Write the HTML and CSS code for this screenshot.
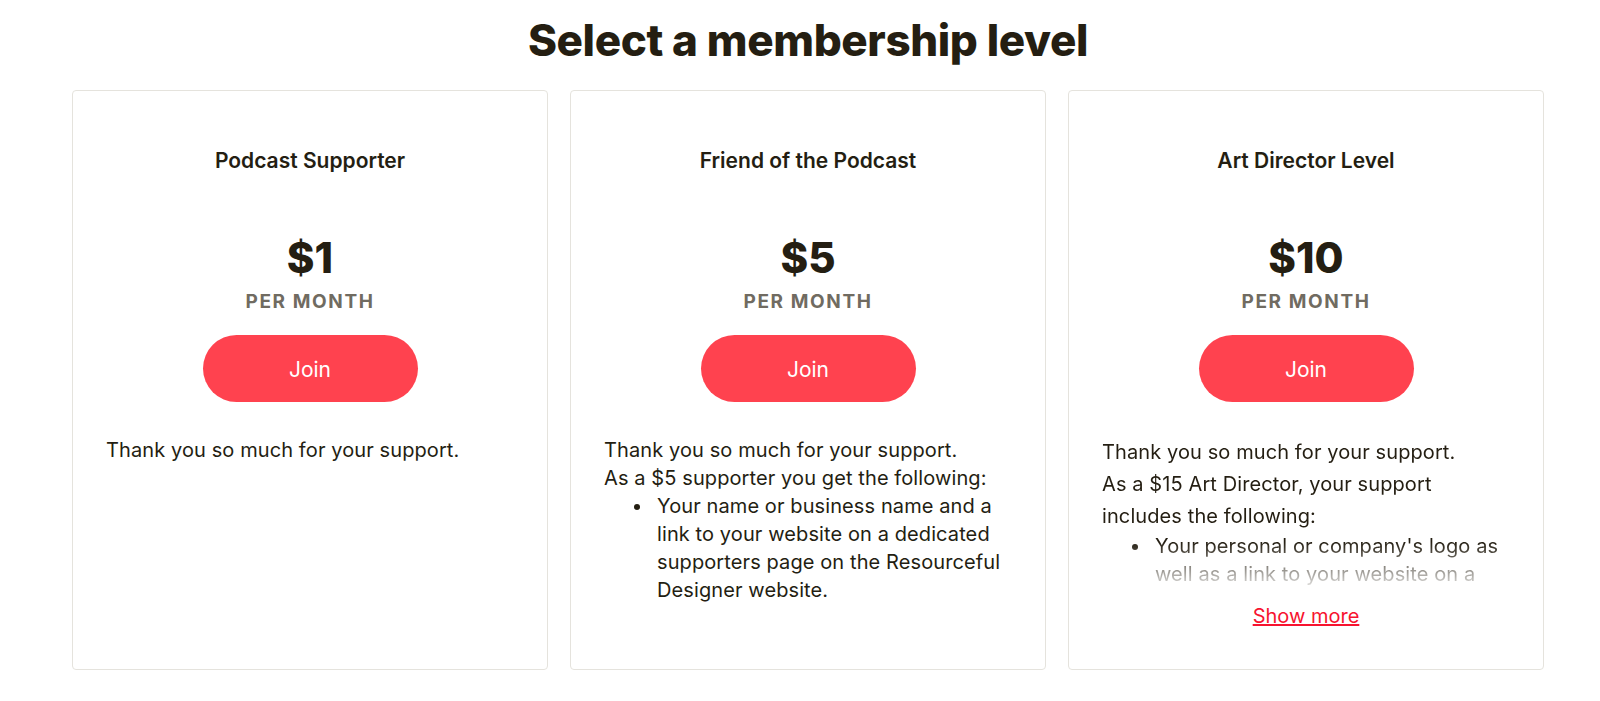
FILE: index.html
```html
<!DOCTYPE html>
<html>
<head>
<meta http-equiv="Content-Type" content="text/html; charset=UTF-8" />
<title>Select a membership level</title>
<link rel="stylesheet" href="styles.css">
</head>
<body>
  <div class="page">
    <h1 class="page-title">Select a membership level</h1>

    <div class="tiers">

      <div class="tier">
        <div class="tier-name">Podcast Supporter</div>
        <div class="tier-price">$1</div>
        <div class="tier-period">PER MONTH</div>
        <div class="tier-action"><button class="join-button">Join</button></div>
        <div class="tier-desc">
          <p class="desc-text">Thank you so much for your support.</p>
        </div>
      </div>

      <div class="tier">
        <div class="tier-name">Friend of the Podcast</div>
        <div class="tier-price">$5</div>
        <div class="tier-period">PER MONTH</div>
        <div class="tier-action"><button class="join-button">Join</button></div>
        <div class="tier-desc">
          <p class="desc-text">Thank you so much for your support.<br>As a $5 supporter you get the following:</p>
          <ul class="desc-list">
            <li>Your name or business name and a link to your website on a dedicated supporters page on the Resourceful Designer website.</li>
          </ul>
        </div>
      </div>

      <div class="tier">
        <div class="tier-name">Art Director Level</div>
        <div class="tier-price">$10</div>
        <div class="tier-period">PER MONTH</div>
        <div class="tier-action"><button class="join-button">Join</button></div>
        <div class="tier-desc clamped">
          <p class="desc-text tall">Thank you so much for your support.</p>
          <p class="desc-text tall">As a $15 Art Director, your support includes the following:</p>
          <ul class="desc-list">
            <li>Your personal or company's logo as well as a link to your website on a dedicated supporters page on the Resourceful Designer website.</li>
          </ul>
        </div>
        <a class="show-more" href="#">Show more</a>
      </div>

    </div>
  </div>
</body>
</html>
```

FILE: styles.css
```css
html, body {
  margin: 0;
  padding: 0;
  background: white;
}
body {
  color: #241e12;
  font-family: Inter, "Noto Sans", Arial, sans-serif;
}
.page {
  width: 1472px;
  margin-left: 72px;
}
.page-title {
  margin: 14px 0 0 0;
  font-size: 44px;
  line-height: 52px;
  font-weight: 800;
  letter-spacing: -0.4px;
  text-align: center;
}
.tiers {
  display: grid;
  grid-template-columns: repeat(3, 476px);
  gap: 22px;
  margin-top: 24px;
}
.tier {
  display: flex;
  flex-direction: column;
  border: 1px solid #e5e3dd;
  border-radius: 4px;
  padding: 56px 33px 40px 33px;
  height: 580px;
  box-sizing: border-box;
}
.tier-name {
  text-align: center;
  font-size: 21px;
  line-height: 28px;
  font-weight: 600;
}
.tier-price {
  margin-top: 59px;
  text-align: center;
  font-size: 42px;
  line-height: 48px;
  font-weight: 800;
}
.tier-period {
  margin-top: 8px;
  text-align: center;
  font-size: 19px;
  line-height: 24px;
  font-weight: 700;
  letter-spacing: 1.6px;
  color: #706b61;
}
.tier-action {
  margin-top: 21px;
  display: flex;
  justify-content: center;
}
.join-button {
  width: 215px;
  height: 67px;
  border: none;
  border-radius: 34px;
  background: #ff424f;
  color: white;
  font-family: inherit;
  font-size: 21px;
  font-weight: 400;
  padding-top: 2px;
}
.tier-desc {
  margin-top: 34px;
  font-size: 20px;
  line-height: 28px;
  letter-spacing: 0.1px;
}
.desc-text {
  margin: 0;
}
.desc-text.tall {
  line-height: 32px;
}
.desc-list {
  margin: 0;
  padding-left: 53px;
  list-style: none;
}
.desc-list li {
  position: relative;
}
.desc-list li::before {
  content: "";
  position: absolute;
  left: -23px;
  top: 12px;
  width: 6px;
  height: 6px;
  border-radius: 50%;
  background: #241e12;
}
.clamped {
  height: 166px;
  overflow: hidden;
  -webkit-mask-image: linear-gradient(to bottom, black 68%, rgba(0, 0, 0, 0.05) 100%);
  mask-image: linear-gradient(to bottom, black 68%, rgba(0, 0, 0, 0.05) 100%);
}
.show-more {
  margin-top: 11px;
  align-self: center;
  color: #f7132f;
  font-size: 20px;
  line-height: 26px;
}
```
